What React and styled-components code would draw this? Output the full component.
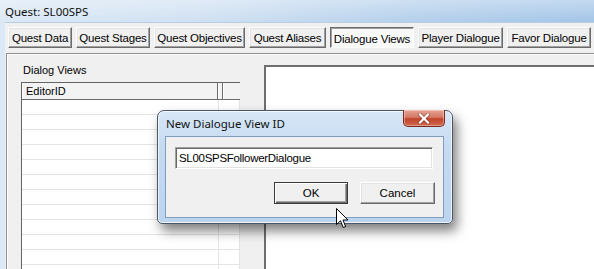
import styled, { createGlobalStyle } from "styled-components"

const Global = createGlobalStyle`
  body {
    margin: 0;
    background: #f0f0f0;
  }
`

const Screen = styled.div`
  position: relative;
  width: 594px;
  height: 269px;
  overflow: hidden;
  display: flex;
  flex-direction: column;
  background: linear-gradient(90deg, #dbe8f5 0%, #cfe0f2 35%, #b3cfeb 70%, #a3c5e8 100%);
  font-family: "Liberation Sans", Arial, sans-serif;
  font-size: 11px;
  color: #000;
`

const TitleBar = styled.div`
  height: 22px;
  flex: none;
  padding-left: 5px;
  display: flex;
  align-items: center;
  font-family: "Noto Sans", "Open Sans", sans-serif;
  font-size: 11.5px;
  color: #111;
  background: linear-gradient(180deg, rgba(255,255,255,0.35) 0%, rgba(255,255,255,0) 100%);
`

const Client = styled.div`
  flex: 1;
  display: flex;
  flex-direction: column;
  margin-left: 5px;
  padding: 4px 0 0 1px;
  background: #f0f0f0;
  border-top: 1px solid #b9cde3;
  min-height: 0;
`

const TabStrip = styled.div`
  display: flex;
  gap: 4px;
  margin-left: 2px;
  height: 21px;
`

const Tab = styled.div`
  width: ${p => p.width}px;
  height: 21px;
  box-sizing: border-box;
  display: flex;
  align-items: center;
  justify-content: center;
  white-space: nowrap;
  font-size: 11.5px;
  letter-spacing: -0.2px;
  background: ${p => (p.active ? "#f9f9f9" : "#f0f0f0")};
  border-style: solid;
  border-width: 1px;
  border-color: ${p => (p.active ? "#6b6b6b #fff #fff #6b6b6b" : "#fff #6b6b6b #6b6b6b #fff")};
  box-shadow: ${p =>
    p.active
      ? "inset 1px 1px 0 #a0a0a0"
      : "inset -1px -1px 0 #a0a0a0, inset 1px 1px 0 #e3e3e3"};
  padding-top: ${p => (p.active ? "2px" : "0")};
`

const Page = styled.div`
  flex: 1;
  display: flex;
  gap: 24px;
  margin-top: 5px;
  padding: 10px 0 0 14px;
  border-top: 1px solid #8e8e8e;
  border-left: 1px solid #8e8e8e;
  box-shadow: inset 1px 1px 0 #fff;
  min-height: 0;
`

const ListColumn = styled.div`
  width: 219px;
  display: flex;
  flex-direction: column;
`

const GroupLabel = styled.div`
  height: 13px;
  line-height: 13px;
  padding-left: 2px;
  margin-bottom: 5px;
`

const ListBox = styled.div`
  flex: 1;
  background: #fff;
  border-top: 1px solid #646464;
  border-left: 1px solid #646464;
  display: flex;
  flex-direction: column;
`

const ListHeader = styled.div`
  display: flex;
  height: 16px;
  border-bottom: 1px solid #6b6b6b;
  background: #f3f3f3;
`

const HeaderCell = styled.div`
  width: ${p => (p.width ? `${p.width}px` : "auto")};
  flex: ${p => (p.width ? "none" : "1")};
  box-sizing: border-box;
  padding-left: 3px;
  line-height: 16px;
  border-left: 1px solid #fff;
  border-right: ${p => (p.width ? "1px solid #6b6b6b" : "none")};
`

const Row = styled.div`
  display: flex;
  height: 14px;
  flex: none;
  border-bottom: 1px solid #e4e4e4;
  &:first-of-type {
    height: 15px;
  }
`

const RowCell = styled.div`
  width: ${p => (p.width ? `${p.width}px` : "auto")};
  flex: ${p => (p.width ? "none" : "1")};
  box-sizing: border-box;
  border-right: 1px solid #e4e4e4;
`

const TextPanel = styled.div`
  flex: 1;
  margin: 1px -20px 0 0;
  background: #fff;
  border-top: 2px solid #6e6e6e;
  border-left: 2px solid #6e6e6e;
`

const Dialog = styled.div`
  position: absolute;
  left: 157px;
  top: 110px;
  width: 296px;
  height: 114px;
  box-sizing: border-box;
  display: flex;
  flex-direction: column;
  border: 1px solid #4a5566;
  border-radius: 7px 7px 5px 5px;
  background: linear-gradient(180deg, #d8e7f7 0%, #c6dbf2 30%, #bcd4ee 100%);
  box-shadow: inset 0 0 0 1px rgba(255,255,255,0.7), 4px 7px 12px rgba(0,0,0,0.5);
`

const DialogTitle = styled.div`
  height: 25px;
  flex: none;
  display: flex;
  align-items: center;
  padding-left: 8px;
  font-family: "Noto Sans", "Open Sans", sans-serif;
  font-size: 11.5px;
  color: #111;
`

const CloseButton = styled.div`
  position: absolute;
  top: -1px;
  right: 7px;
  width: 42px;
  height: 17px;
  box-sizing: border-box;
  display: flex;
  align-items: center;
  justify-content: center;
  border: 1px solid #7a2a1c;
  border-top: none;
  border-radius: 0 0 5px 5px;
  background: linear-gradient(180deg, #e6a292 0%, #d67a65 45%, #c2432b 55%, #cf6a4e 100%);
  box-shadow: inset 0 0 0 1px rgba(255,255,255,0.35);
`

const DialogBody = styled.div`
  flex: 1;
  margin: 0 8px 5px 7px;
  padding: 10px 8px 0 9px;
  background: #f0f0f0;
  border: 1px solid #7f9dbf;
  display: flex;
  flex-direction: column;
`

const TextInput = styled.div`
  height: 22px;
  width: 258px;
  box-sizing: border-box;
  background: #fff;
  border-style: solid;
  border-width: 1px;
  border-color: #a0a0a0 #fff #fff #a0a0a0;
  box-shadow: inset 1px 1px 0 #696969, inset -1px -1px 0 #e3e3e3;
  padding-left: 3px;
  line-height: 20px;
  font-size: 11.5px;
  letter-spacing: -0.3px;
`

const ButtonRow = styled.div`
  display: flex;
  justify-content: flex-end;
  gap: 12px;
  margin-top: 13px;
`

const Button = styled.div`
  width: ${p => p.width}px;
  height: 22px;
  box-sizing: border-box;
  display: flex;
  align-items: center;
  justify-content: center;
  font-size: 11.5px;
  background: #f0f0f0;
  border: 1px solid ${p => (p.primary ? "#3a3a3a" : "#6b6b6b")};
  border-color: ${p => (p.primary ? "#3a3a3a" : "#fff #6b6b6b #6b6b6b #fff")};
  box-shadow: ${p =>
    p.primary
      ? "inset 1px 1px 0 #fff, inset -1px -1px 0 #6b6b6b, inset -2px -2px 0 #a0a0a0"
      : "inset -1px -1px 0 #a0a0a0, inset 1px 1px 0 #e3e3e3"};
`

const Cursor = styled.svg`
  position: absolute;
  left: 336px;
  top: 208px;
`

const tabs = [
  { label: "Quest Data", width: 64 },
  { label: "Quest Stages", width: 74 },
  { label: "Quest Objectives", width: 91 },
  { label: "Quest Aliases", width: 77 },
  { label: "Dialogue Views", width: 84, active: true },
  { label: "Player Dialogue", width: 85 },
  { label: "Favor Dialogue", width: 84 },
]

const App = () => {
  return (
    <Screen>
      <Global />
      <TitleBar>Quest: SL00SPS</TitleBar>
      <Client>
        <TabStrip>
          {tabs.map(t => (
            <Tab key={t.label} width={t.width} active={t.active}>{t.label}</Tab>
          ))}
        </TabStrip>
        <Page>
          <ListColumn>
            <GroupLabel>Dialog Views</GroupLabel>
            <ListBox>
              <ListHeader>
                <HeaderCell width={196}>EditorID</HeaderCell>
                <HeaderCell width={4} />
                <HeaderCell />
              </ListHeader>
              {Array.from({ length: 12 }).map((_, i) => (
                <Row key={i}>
                  <RowCell width={197} />
                  <RowCell />
                </Row>
              ))}
            </ListBox>
          </ListColumn>
          <TextPanel />
        </Page>
      </Client>

      <Dialog>
        <DialogTitle>New Dialogue View ID</DialogTitle>
        <CloseButton>
          <svg width="14" height="11" viewBox="0 0 14 11">
            <path d="M3 1.5 L11 9.5 M11 1.5 L3 9.5" stroke="#5a1a10" strokeWidth="3.4" strokeLinecap="square" opacity="0.6" />
            <path d="M3 1.5 L11 9.5 M11 1.5 L3 9.5" stroke="#fff" strokeWidth="2.2" strokeLinecap="square" />
          </svg>
        </CloseButton>
        <DialogBody>
          <TextInput>SL00SPSFollowerDialogue</TextInput>
          <ButtonRow>
            <Button width={74} primary>OK</Button>
            <Button width={75}>Cancel</Button>
          </ButtonRow>
        </DialogBody>
      </Dialog>

      <Cursor width="13" height="21" viewBox="0 0 13 21">
        <path d="M0.5 0.5 L0.5 16.5 L4.5 12.8 L7.2 19.5 L9.6 18.5 L7 12 L12 12 Z" fill="#fff" stroke="#000" strokeWidth="1" strokeLinejoin="miter" />
      </Cursor>
    </Screen>
  )
}

export default App
